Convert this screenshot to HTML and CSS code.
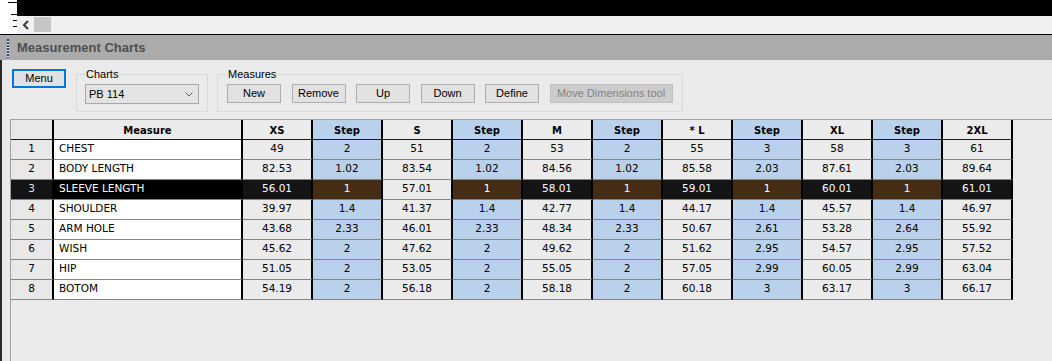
FILE: index.html
```html
<!DOCTYPE html>
<html lang="en">
<head>
  <meta charset="UTF-8" />
  <meta name="viewport" content="width=device-width, initial-scale=1.0" />
  <title>Measurement Charts</title>
  <link rel="stylesheet" href="styles.css">
</head>
<body>
  <div class="window">
    <div class="topbar">
      <svg class="ruler" width="17" height="34" viewBox="0 0 17 34">
        <rect x="8" y="2" width="9" height="1" fill="#000" />
        <rect x="11" y="14" width="6" height="1" fill="#000" />
        <rect x="13" y="20" width="4" height="1" fill="#000" />
        <rect x="13" y="26" width="4" height="1" fill="#000" />
      </svg>
      <div class="topmain">
        <div class="blackbar"></div>
        <div class="navbar">
          <svg class="nav-back" width="8" height="10" viewBox="0 0 8 10">
            <polyline points="6,1 2,5 6,9" fill="none" stroke="#3a3a3a" stroke-width="2" />
          </svg>
          <span class="navbox"></span>
        </div>
      </div>
    </div>

    <div class="titlebar">
      <span class="grip"></span>
      <span class="title">Measurement Charts</span>
    </div>

    <div class="content">
      <div class="toolbar">
        <button class="btn btn-focus">Menu</button>

        <fieldset class="group group-charts">
          <legend>Charts</legend>
          <div class="combo">
            <span>PB 114</span>
            <svg width="8" height="5" viewBox="0 0 8 5">
              <polyline points="0.5,0.5 4,4 7.5,0.5" fill="none" stroke="#606060" stroke-width="1" />
            </svg>
          </div>
        </fieldset>

        <fieldset class="group group-measures">
          <legend>Measures</legend>
          <div class="btn-row">
            <button class="btn">New</button>
            <button class="btn">Remove</button>
            <button class="btn">Up</button>
            <button class="btn">Down</button>
            <button class="btn">Define</button>
            <button class="btn btn-wide" disabled>Move Dimensions tool</button>
          </div>
        </fieldset>
      </div>

      <div class="grid">
        <table>
          <colgroup>
            <col class="c-rh"><col class="c-name">
            <col class="c-val"><col class="c-val"><col class="c-val"><col class="c-val">
            <col class="c-val"><col class="c-val"><col class="c-val"><col class="c-val">
            <col class="c-val"><col class="c-val"><col class="c-val">
          </colgroup>
          <thead>
            <tr>
              <th class="rh"></th>
              <th class="name-h">Measure</th>
              <th class="size">XS</th><th class="step">Step</th>
              <th class="size">S</th><th class="step">Step</th>
              <th class="size">M</th><th class="step">Step</th>
              <th class="size">* L</th><th class="step">Step</th>
              <th class="size">XL</th><th class="step">Step</th>
              <th class="size">2XL</th>
            </tr>
          </thead>
          <tbody>
            <tr>
              <td class="rh">1</td><td class="name">CHEST</td>
              <td class="size">49</td><td class="step">2</td>
              <td class="size">51</td><td class="step">2</td>
              <td class="size">53</td><td class="step">2</td>
              <td class="size">55</td><td class="step">3</td>
              <td class="size">58</td><td class="step">3</td>
              <td class="size">61</td>
            </tr>
            <tr>
              <td class="rh">2</td><td class="name">BODY LENGTH</td>
              <td class="size">82.53</td><td class="step">1.02</td>
              <td class="size">83.54</td><td class="step">1.02</td>
              <td class="size">84.56</td><td class="step">1.02</td>
              <td class="size">85.58</td><td class="step">2.03</td>
              <td class="size">87.61</td><td class="step">2.03</td>
              <td class="size">89.64</td>
            </tr>
            <tr class="sel">
              <td class="rh">3</td><td class="name">SLEEVE LENGTH</td>
              <td class="size">56.01</td><td class="step">1</td>
              <td class="size plain">57.01</td><td class="step">1</td>
              <td class="size">58.01</td><td class="step">1</td>
              <td class="size">59.01</td><td class="step">1</td>
              <td class="size">60.01</td><td class="step">1</td>
              <td class="size">61.01</td>
            </tr>
            <tr>
              <td class="rh">4</td><td class="name">SHOULDER</td>
              <td class="size">39.97</td><td class="step">1.4</td>
              <td class="size">41.37</td><td class="step">1.4</td>
              <td class="size">42.77</td><td class="step">1.4</td>
              <td class="size">44.17</td><td class="step">1.4</td>
              <td class="size">45.57</td><td class="step">1.4</td>
              <td class="size">46.97</td>
            </tr>
            <tr>
              <td class="rh">5</td><td class="name">ARM HOLE</td>
              <td class="size">43.68</td><td class="step">2.33</td>
              <td class="size">46.01</td><td class="step">2.33</td>
              <td class="size">48.34</td><td class="step">2.33</td>
              <td class="size">50.67</td><td class="step">2.61</td>
              <td class="size">53.28</td><td class="step">2.64</td>
              <td class="size">55.92</td>
            </tr>
            <tr>
              <td class="rh">6</td><td class="name">WISH</td>
              <td class="size">45.62</td><td class="step">2</td>
              <td class="size">47.62</td><td class="step">2</td>
              <td class="size">49.62</td><td class="step">2</td>
              <td class="size">51.62</td><td class="step">2.95</td>
              <td class="size">54.57</td><td class="step">2.95</td>
              <td class="size">57.52</td>
            </tr>
            <tr>
              <td class="rh">7</td><td class="name">HIP</td>
              <td class="size">51.05</td><td class="step">2</td>
              <td class="size">53.05</td><td class="step">2</td>
              <td class="size">55.05</td><td class="step">2</td>
              <td class="size">57.05</td><td class="step">2.99</td>
              <td class="size">60.05</td><td class="step">2.99</td>
              <td class="size">63.04</td>
            </tr>
            <tr>
              <td class="rh">8</td><td class="name">BOTOM</td>
              <td class="size">54.19</td><td class="step">2</td>
              <td class="size">56.18</td><td class="step">2</td>
              <td class="size">58.18</td><td class="step">2</td>
              <td class="size">60.18</td><td class="step">3</td>
              <td class="size">63.17</td><td class="step">3</td>
              <td class="size">66.17</td>
            </tr>
          </tbody>
        </table>
      </div>
    </div>
  </div>
</body>
</html>
```

FILE: styles.css
```css
* {
  margin: 0;
  padding: 0;
  box-sizing: border-box;
}
html, body {
  height: 100%;
  overflow: hidden;
}
body {
  font-family: "Liberation Sans", Arial, sans-serif;
  font-size: 11px;
  color: #000;
  background: #eaeaea;
}
.window {
  display: flex;
  flex-direction: column;
  height: 100vh;
}

/* top strip */
.topbar {
  display: flex;
  height: 35px;
  border-bottom: 1px solid #000;
  background: #fff;
}
.ruler {
  display: block;
  flex: none;
}
.topmain {
  flex: 1;
  display: flex;
  flex-direction: column;
}
.blackbar {
  height: 16px;
  background: #000;
}
.navbar {
  height: 18px;
  background: #f0f0f0;
  display: flex;
  align-items: flex-start;
}
.nav-back {
  margin: 4px 0 0 5px;
}
.navbox {
  width: 17px;
  height: 15px;
  margin: 1px 0 0 4px;
  background: #c6c6c6;
}

/* title */
.titlebar {
  height: 25px;
  background: #ababab;
  display: flex;
  align-items: flex-start;
  padding-left: 7px;
}
.grip {
  width: 2px;
  height: 19px;
  margin-top: 4px;
  background: repeating-linear-gradient(to bottom, #2f3f86 0, #2f3f86 2px, #f4f4f4 2px, #f4f4f4 3px);
}
.title {
  margin-left: 8px;
  font-size: 13px;
  font-weight: bold;
  line-height: 25px;
  color: #4f4f4f;
}

/* main area */
.content {
  flex: 1;
  display: flex;
  flex-direction: column;
  border-left: 2px solid #2a2a2a;
  background: #eaeaea;
}
.toolbar {
  display: flex;
  align-items: flex-start;
  padding: 9px 0 0 10px;
}
.btn {
  width: 54px;
  height: 19px;
  border: 1px solid #adadad;
  background: #e1e1e1;
  font-family: "Liberation Sans", Arial, sans-serif;
  font-size: 11px;
  color: #000;
  line-height: 17px;
}
.btn-focus {
  border: 2px solid #0078d7;
  line-height: 15px;
}
.btn-wide {
  width: 123px;
}
.btn:disabled {
  background: #cccccc;
  border-color: #bfbfbf;
  color: #838383;
}
.btn-row {
  display: flex;
  gap: 10.5px;
}

.group {
  margin-top: -1px;
  border: 1px solid #d9d9d9;
}
.group legend {
  padding: 0 1px;
  line-height: 13px;
  font-size: 11px;
}
.group-charts {
  margin-left: 10px;
  padding: 3px 8px 7px 8px;
}
.group-measures {
  margin-left: 9px;
  padding: 3px 9px 8px 9px;
}
.combo {
  width: 114px;
  height: 20px;
  border: 1px solid #a8a8a8;
  background: #e3e3e3;
  display: flex;
  align-items: center;
  justify-content: space-between;
  padding: 0 5px 0 3px;
}
.combo span {
  font-size: 11px;
}

/* grid */
.grid {
  flex: 1;
  margin: 7px 0 0 8px;
  border-top: 1px solid #a0a0a0;
  border-left: 1px solid #a0a0a0;
  background: #eaeaea;
}
table {
  border-collapse: separate;
  border-spacing: 0;
  table-layout: fixed;
  width: 1002px;
  font-family: "DejaVu Sans", sans-serif;
  font-size: 10.5px;
}
.c-rh { width: 43px; }
.c-name { width: 189px; }
.c-val { width: 70px; }

th, td {
  border-right: 2px solid #000;
  border-bottom: 1px solid #858585;
  text-align: center;
  line-height: 14px;
  white-space: nowrap;
  overflow: hidden;
}
td {
  padding: 1px 0 4px;
}
th {
  font-size: 10px;
  font-weight: bold;
  padding: 4px 0 1px;
  border-bottom: 1px solid #1c1c1c;
}
.rh { background: #e8e8e8; }
.size { background: #ebebeb; }
.step { background: #b9d1ea; }
.name-h { background: #ebebeb; }
td.name {
  background: #fff;
  text-align: left;
  padding-left: 5px;
}

/* selected row */
.sel td { color: #fff; background: #141414; }
.sel td.rh { color: #e0e0e0; }
.sel td.name { background: #000; }
.sel td.step { background: #452c15; }
.sel td.plain { background: #ebebeb; color: #000; }
```
